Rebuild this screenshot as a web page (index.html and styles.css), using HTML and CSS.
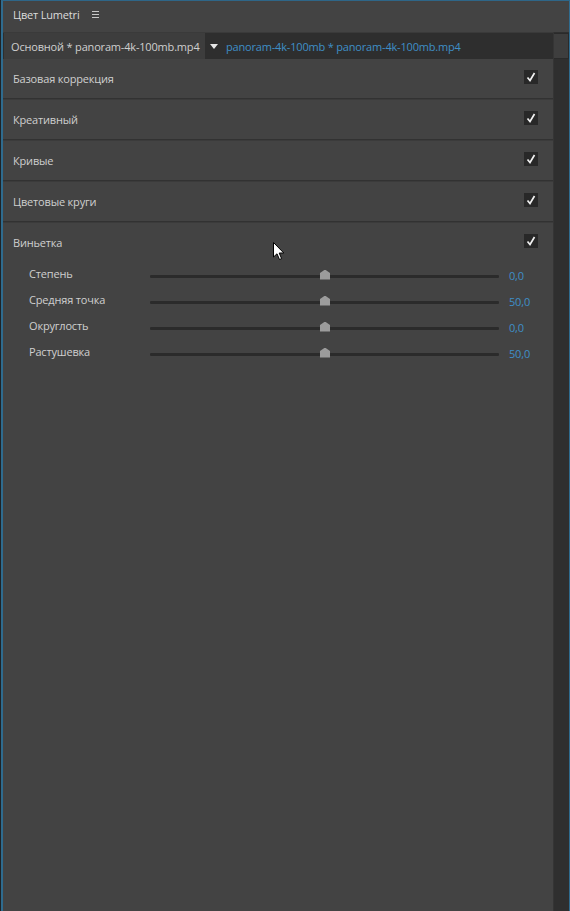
FILE: index.html
```html
<!DOCTYPE html>
<html lang="ru">
<head>
<meta charset="utf-8">
<link rel="stylesheet" href="styles.css">
</head>
<body>
<div class="frame">
  <div class="header">
    <span class="title">Цвет Lumetri</span>
    <span class="menu"><i></i><i></i><i></i></span>
  </div>
  <div class="body">
    <div class="content">
      <div class="tabs">
        <div class="tab">Основной * panoram-4k-100mb.mp4</div>
        <div class="tab2"><span class="tri"></span><span class="link">panoram-4k-100mb * panoram-4k-100mb.mp4</span></div>
      </div>
      <div class="section"><span>Базовая коррекция</span><span class="cb"><svg viewBox="0 0 14 14" width="14" height="14"><path d="M3.5 7.5 L6 10.5 L10.5 3" fill="none" stroke="#f0f0f0" stroke-width="1.7"/></svg></span></div>
      <div class="section"><span>Креативный</span><span class="cb"><svg viewBox="0 0 14 14" width="14" height="14"><path d="M3.5 7.5 L6 10.5 L10.5 3" fill="none" stroke="#f0f0f0" stroke-width="1.7"/></svg></span></div>
      <div class="section"><span>Кривые</span><span class="cb"><svg viewBox="0 0 14 14" width="14" height="14"><path d="M3.5 7.5 L6 10.5 L10.5 3" fill="none" stroke="#f0f0f0" stroke-width="1.7"/></svg></span></div>
      <div class="section"><span>Цветовые круги</span><span class="cb"><svg viewBox="0 0 14 14" width="14" height="14"><path d="M3.5 7.5 L6 10.5 L10.5 3" fill="none" stroke="#f0f0f0" stroke-width="1.7"/></svg></span></div>
      <div class="section open">
        <div class="sec-head"><span>Виньетка</span><span class="cb"><svg viewBox="0 0 14 14" width="14" height="14"><path d="M3.5 7.5 L6 10.5 L10.5 3" fill="none" stroke="#f0f0f0" stroke-width="1.7"/></svg></span></div>
        <div class="params">
          <div class="param"><span class="label">Степень</span><span class="track"><span class="thumb"></span></span><span class="val">0,0</span></div>
          <div class="param"><span class="label">Средняя точка</span><span class="track"><span class="thumb"></span></span><span class="val">50,0</span></div>
          <div class="param"><span class="label">Округлость</span><span class="track"><span class="thumb"></span></span><span class="val">0,0</span></div>
          <div class="param"><span class="label">Растушевка</span><span class="track"><span class="thumb"></span></span><span class="val">50,0</span></div>
        </div>
      </div>
    </div>
    <div class="scroll"><div class="scroll-top"></div></div>
  </div>
  <svg class="cursor" viewBox="0 0 12 19" width="12" height="19"><path d="M0.5 0.5 L0.5 15 L4 11.8 L6.5 17.5 L8.6 16.6 L6.2 11 L10.8 11 Z" fill="#ffffff" stroke="#000000" stroke-width="1"/></svg>
</div>
</body>
</html>
```
FILE: styles.css
```css
html, body {
  margin: 0;
  padding: 0;
  background: #1f2326;
}
body {
  width: 570px;
  height: 911px;
  overflow: hidden;
  font-family: "Open Sans", "Noto Sans", "DejaVu Sans", sans-serif;
  font-size: 11px;
  letter-spacing: -0.18px;
  color: #c9c9c9;
}
.frame {
  position: relative;
  margin-left: 1px;
  width: 566px;
  height: 910px;
  border-top: 1px solid #2e6688;
  border-left: 2px solid #2f6b8e;
  border-right: 2px solid #2f6b8e;
  background: #434343;
  display: flex;
  flex-direction: column;
}
.header {
  height: 31px;
  display: flex;
  align-items: center;
  padding-left: 10px;
  gap: 12px;
  background: #434343;
  flex: none;
}
.title {
  color: #dcdcdc;
  position: relative;
  top: -2px;
}
.menu {
  display: flex;
  flex-direction: column;
  gap: 2px;
  position: relative;
  top: -2px;
}
.menu i {
  display: block;
  width: 7px;
  height: 1px;
  background: #c8c8c8;
}
.body {
  flex: 1;
  display: flex;
}
.content {
  flex: 1;
  display: flex;
  flex-direction: column;
  background: #434343;
}
.scroll {
  width: 15px;
  background: #2f2f2f;
  border-left: 1px solid #353535;
  flex: none;
}
.scroll-top {
  height: 24px;
  margin-top: 1px;
  background: #3e3e3e;
  border: 1px solid #2a2a2a;
  border-left: none;
}
.tabs {
  height: 26px;
  background: #2e2e2e;
  display: flex;
  align-items: stretch;
  border-top: 1px solid #3a3a3a;
}
.tab {
  margin-left: 1px;
  width: 194px;
  padding-left: 7px;
  background: #3d3d3d;
  display: flex;
  align-items: center;
  color: #cfcfcf;
  white-space: nowrap;
}
.tab2 {
  display: flex;
  align-items: center;
  padding-left: 5px;
  gap: 8px;
}
.tri {
  width: 0;
  height: 0;
  border-left: 4px solid transparent;
  border-right: 4px solid transparent;
  border-top: 5px solid #e6e6e6;
}
.link {
  color: #3f8fc7;
  white-space: nowrap;
}
.section {
  height: 39px;
  display: flex;
  align-items: center;
  justify-content: space-between;
  padding: 0 15px 0 10px;
  border-bottom: 1px solid #323232;
  box-shadow: 0 1px 0 #3b3b3b;
  margin-bottom: 1px;
  color: #cfcfcf;
}
.section.open {
  height: auto;
  display: block;
  padding: 0;
  border-bottom: none;
  box-shadow: none;
}
.sec-head {
  height: 39px;
  display: flex;
  align-items: center;
  justify-content: space-between;
  padding: 0 15px 0 10px;
}
.cb {
  width: 14px;
  height: 14px;
  background: #282828;
  display: block;
  position: relative;
  top: -2px;
}
.cb svg {
  display: block;
}
.params {
  display: flex;
  flex-direction: column;
}
.param {
  height: 26px;
  display: flex;
  align-items: center;
  padding-left: 26px;
}
.label {
  width: 121px;
  flex: none;
  position: relative;
  top: -2px;
}
.track {
  position: relative;
  top: 1px;
  width: 349px;
  height: 3px;
  background: #2b2b2b;
  flex: none;
  border-radius: 1px;
}
.thumb {
  position: absolute;
  left: 170px;
  top: -5px;
  width: 10px;
  height: 10px;
  background: #9c9c9c;
  clip-path: polygon(50% 0, 100% 35%, 100% 100%, 0 100%, 0 35%);
}
.val {
  margin-left: 10px;
  color: #3f8fc7;
}
.cursor {
  position: absolute;
  left: 270px;
  top: 241px;
}
```
